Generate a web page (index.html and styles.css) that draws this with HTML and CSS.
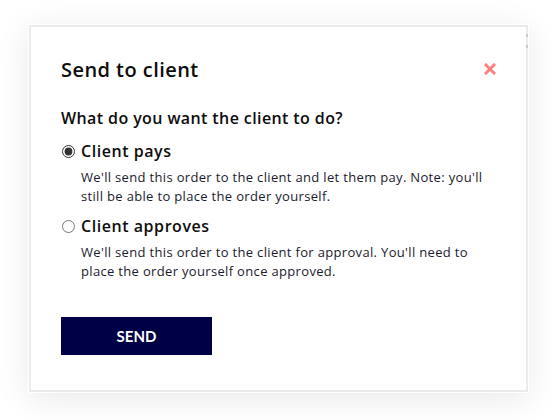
FILE: index.html
```html
<!DOCTYPE html>
<html>
<head>
<meta charset="utf-8">
<link rel="stylesheet" href="styles.css">
</head>
<body>
<div class="modal">
  <div class="panel">
    <div class="header">
      <h1 class="title">Send to client</h1>
      <button class="close" aria-label="Close">
        <svg width="12" height="12" viewBox="0 0 12 12"><path d="M2 2L10 10M10 2L2 10" stroke="#ff7f7f" stroke-width="3" stroke-linecap="square"/></svg>
      </button>
    </div>
    <h2 class="question">What do you want the client to do?</h2>
    <div class="options">
      <label class="option">
        <span class="option-head"><input type="radio" name="mode" checked><span class="option-label">Client pays</span></span>
        <span class="desc">We'll send this order to the client and let them pay. Note: you'll still be able to place the order yourself.</span>
      </label>
      <label class="option">
        <span class="option-head"><input type="radio" name="mode"><span class="option-label">Client approves</span></span>
        <span class="desc">We'll send this order to the client for approval. You'll need to place the order yourself once approved.</span>
      </label>
    </div>
    <button class="send">SEND</button>
  </div>
</div>
<div class="scrollmarks"><span></span><span></span></div>
</body>
</html>
```
FILE: styles.css
```css
html, body { margin: 0; padding: 0; background: #fff; }
body { width: 552px; height: 420px; overflow: hidden; font-family: "Open Sans", sans-serif; color: #111; position: relative; }
.modal {
  margin: 24px 0 0 28px;
  width: 499px;
  padding: 1px;
  background: #fff;
  box-shadow: 0 6px 32px rgba(0,0,0,0.09);
}
.panel {
  border: 2px solid #ebebeb;
  height: 367px;
  box-sizing: border-box;
  padding: 24px 30px 0 30px;
}
.header { display: flex; justify-content: space-between; align-items: center; height: 36px; }
.title { margin: 0; font-size: 20px; font-weight: 600; letter-spacing: 0.45px; color: #0d0d0d; }
.close { border: 0; background: none; padding: 0; margin-right: 0; width: 12px; height: 12px; display: flex; }
.question { margin: 20px 0 0 0; font-size: 16px; font-weight: 600; letter-spacing: 0.4px; color: #0d0d0d; }
.options { margin-top: 10px; display: flex; flex-direction: column; gap: 8px; }
.option { display: flex; flex-direction: column; }
.option-head { display: flex; align-items: center; gap: 6px; height: 24px; }
.option-head input { margin: 0 0 0 1px; width: 13px; height: 13px; accent-color: #333; }
.option-label { font-size: 16px; font-weight: 600; letter-spacing: 0.55px; color: #0d0d0d; }
.desc { display: block; margin: 5px 0 0 20px; font-size: 13px; letter-spacing: 0.33px; line-height: 19px; color: #1a1a2e; width: 412px; }
.send {
  margin-top: 36px;
  width: 151px; height: 38px;
  border: 0; background: #000046; color: #fff;
  font-family: Lato, sans-serif; font-weight: 700; font-size: 15px;
  display: block;
}
.scrollmarks { position: absolute; left: 526px; top: 34px; display: flex; flex-direction: column; gap: 8px; }
.scrollmarks span { width: 2px; height: 3px; background: #c3cad3; }
```
